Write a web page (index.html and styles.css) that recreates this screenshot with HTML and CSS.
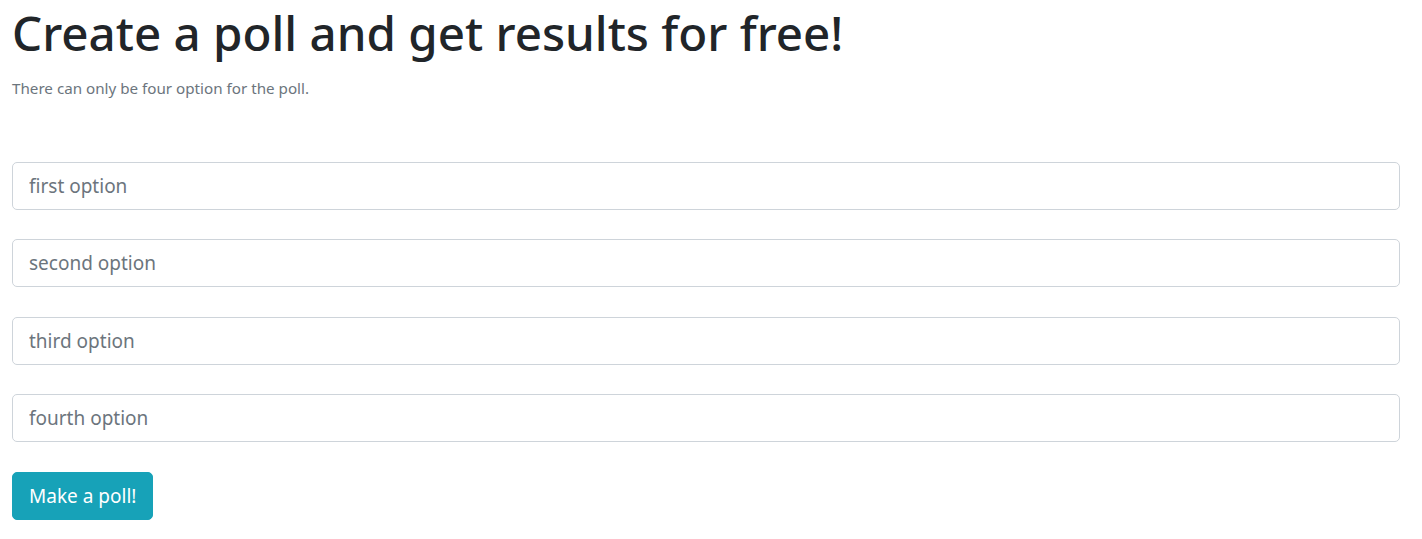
FILE: index.html
```html
<!DOCTYPE html>
<html lang="en">
<head>
<meta charset="utf-8">
<title>Create a poll</title>
<link rel="stylesheet" href="styles.css">
</head>
<body>
<div class="container">
  <h1 class="title">Create a poll and get results for free!</h1>
  <p class="lead-muted">There can only be four option for the poll.</p>
  <form class="poll-form">
    <input class="field" type="text" placeholder="first option">
    <input class="field" type="text" placeholder="second option">
    <input class="field" type="text" placeholder="third option">
    <input class="field" type="text" placeholder="fourth option">
    <button class="btn" type="button">Make a poll!</button>
  </form>
</div>
</body>
</html>
```

FILE: styles.css
```css
* { box-sizing: border-box; }
body {
  margin: 0;
  font-family: "Noto Sans", "Open Sans", sans-serif;
  color: #212529;
  background: #fff;
}
.container {
  padding: 0 22px 0 12px;
}
.title {
  margin: 0;
  font-size: 47.5px;
  font-weight: 500;
  line-height: 1.4;
  color: #212529;
}
.lead-muted {
  margin: 11px 0 0;
  font-size: 15.2px;
  color: #6c757d;
}
.poll-form {
  display: flex;
  flex-direction: column;
  align-items: flex-start;
  gap: 29.5px;
  margin-top: 64px;
}
.field {
  width: 100%;
  height: 48px;
  padding: 0 16px;
  font: inherit;
  font-size: 19px;
  color: #495057;
  border: 1px solid #ced4da;
  border-radius: 5px;
  background: #fff;
}
.field::placeholder { color: #6c757d; opacity: 1; }
.btn {
  height: 48px;
  padding: 0 16px;
  font: inherit;
  font-size: 19px;
  color: #fff;
  background: #17a2b8;
  border: 1px solid #17a2b8;
  border-radius: 5px;
}
```
